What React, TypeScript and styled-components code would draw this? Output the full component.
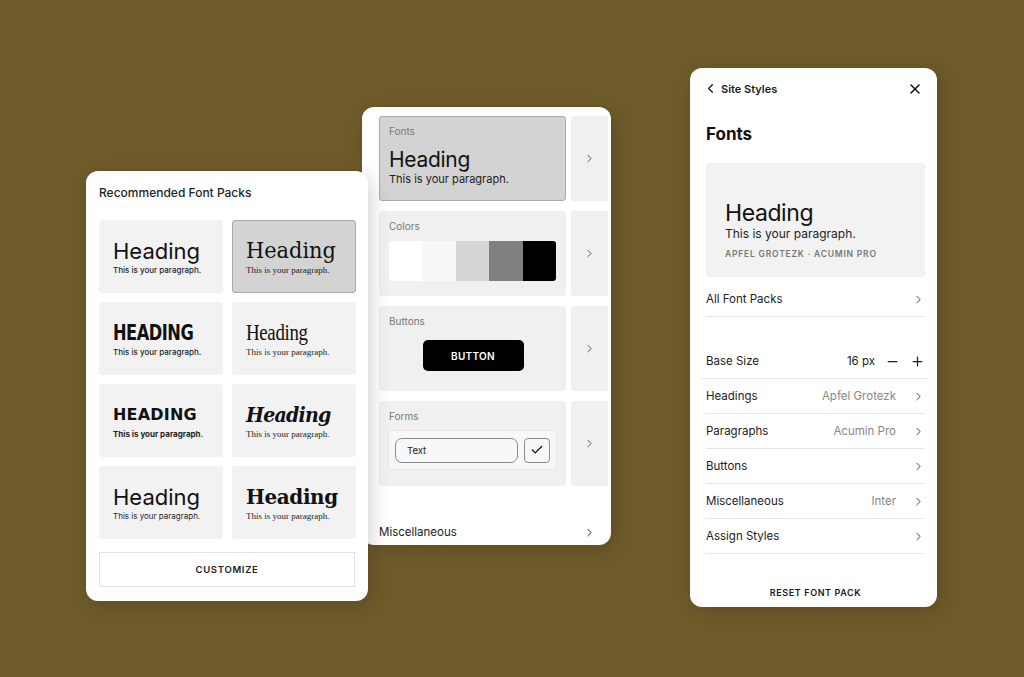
import React from 'react';
import styled, { createGlobalStyle } from 'styled-components';
import { ChevronRight, ChevronLeft, X, Minus, Plus, Check } from 'lucide-react';

const GlobalStyle = createGlobalStyle`
  html, body {
    margin: 0;
    padding: 0;
    background: #6e5b2a;
    font-family: Inter, "Liberation Sans", sans-serif;
    color: #1a1a1a;
  }
  * { box-sizing: border-box; }
`;

const Canvas = styled.div`
  position: relative;
  width: 1024px;
  height: 677px;
  overflow: hidden;
  background: #6e5b2a;
`;

const Card = styled.div<{ $x: number; $y: number; $w: number; $h: number; $z?: number }>`
  position: absolute;
  left: ${(p) => p.$x}px;
  top: ${(p) => p.$y}px;
  width: ${(p) => p.$w}px;
  height: ${(p) => p.$h}px;
  z-index: ${(p) => p.$z ?? 1};
  background: #fff;
  border-radius: 12px;
  overflow: hidden;
  box-shadow: 4px 4px 18px rgba(0, 0, 0, 0.16);
`;

/* ---------- left card ---------- */

const PackCard = styled(Card)`
  padding: 14px 13px 14px 13px;
  display: flex;
  flex-direction: column;
`;

const PackTitle = styled.div`
  font-size: 12px;
  font-weight: 500;
  color: #1e1e1e;
  line-height: 16px;
  margin-bottom: 19px;
`;

const PackGrid = styled.div`
  display: grid;
  grid-template-columns: 124px 124px;
  grid-auto-rows: 73px;
  gap: 9px;
  margin-bottom: 13px;
`;

const PackTile = styled.div<{ $selected?: boolean }>`
  background: ${(p) => (p.$selected ? '#d3d3d3' : '#f2f2f2')};
  border: 1px solid ${(p) => (p.$selected ? '#a9a9a9' : '#f2f2f2')};
  border-radius: 3px;
  display: flex;
  flex-direction: column;
  justify-content: center;
  padding: 0 0 0 13px;
`;

const TileHeading = styled.div<{ $font: string; $weight?: number; $italic?: boolean; $size?: number; $spacing?: number; $stretch?: number }>`
  font-family: ${(p) => p.$font};
  font-weight: ${(p) => p.$weight ?? 400};
  font-style: ${(p) => (p.$italic ? 'italic' : 'normal')};
  font-size: ${(p) => p.$size ?? 22}px;
  letter-spacing: ${(p) => p.$spacing ?? 0}px;
  line-height: 26px;
  color: #111;
  white-space: nowrap;
  transform-origin: left center;
  transform: scaleX(${(p) => p.$stretch ?? 1});
`;

const TileText = styled.div<{ $font: string; $weight?: number; $size?: number }>`
  font-family: ${(p) => p.$font};
  font-weight: ${(p) => p.$weight ?? 400};
  font-size: ${(p) => p.$size ?? 8}px;
  line-height: 12px;
  color: #222;
  white-space: nowrap;
`;

const OutlineButton = styled.div`
  height: 35px;
  border: 1px solid #e2e2e2;
  display: flex;
  align-items: center;
  justify-content: center;
  font-size: 9.5px;
  font-weight: 600;
  letter-spacing: 0.7px;
  color: #222;
`;

/* ---------- middle card ---------- */

const StyleCard = styled(Card)`
  padding: 9px 3px 0 17px;
  display: flex;
  flex-direction: column;
`;

const StyleGrid = styled.div`
  display: grid;
  grid-template-columns: 187px 37px;
  grid-auto-rows: 85px;
  column-gap: 5px;
  row-gap: 10px;
`;

const StylePanel = styled.div<{ $selected?: boolean }>`
  background: ${(p) => (p.$selected ? '#d3d3d3' : '#f0f0f0')};
  border: 1px solid ${(p) => (p.$selected ? '#a9a9a9' : '#f0f0f0')};
  border-radius: 3px;
  padding: 8px 8px 0 9px;
  display: flex;
  flex-direction: column;
`;

const ArrowPanel = styled.div`
  background: #f0f0f0;
  border-radius: 3px 0 0 3px;
  display: flex;
  align-items: center;
  justify-content: center;
  padding-right: 1px;
  color: #555;
`;

const PanelLabel = styled.div`
  font-size: 10px;
  color: #777;
  line-height: 13px;
`;

const PanelHeading = styled.div`
  font-size: 21px;
  line-height: 24px;
  margin-top: 10px;
  letter-spacing: -0.3px;
  color: #111;
`;

const PanelText = styled.div`
  font-size: 11px;
  line-height: 15px;
  color: #222;
`;

const Swatches = styled.div`
  display: flex;
  margin-top: 8px;
  height: 40px;
  border-radius: 3px;
  overflow: hidden;
  margin-right: 1px;
`;

const Swatch = styled.div<{ $c: string }>`
  flex: 1;
  background: ${(p) => p.$c};
`;

const ButtonWrap = styled.div`
  display: flex;
  justify-content: center;
  margin-top: 12px;
`;

const BlackButton = styled.div`
  width: 101px;
  height: 31px;
  background: #000;
  color: #fff;
  border-radius: 5px;
  display: flex;
  align-items: center;
  justify-content: center;
  font-size: 10px;
  font-weight: 600;
  letter-spacing: 0.3px;
`;

const FormBox = styled.div`
  margin-top: 7px;
  margin-left: -1px;
  height: 40px;
  background: #f7f7f7;
  border: 1px solid #e8e8e8;
  border-radius: 2px;
  display: flex;
  align-items: center;
  gap: 6px;
  padding: 0 6px;
`;

const TextInput = styled.div`
  flex: 1;
  height: 25px;
  border: 1px solid #8a8a8a;
  border-radius: 7px;
  display: flex;
  align-items: center;
  padding-left: 11px;
  font-size: 9.5px;
  color: #222;
`;

const CheckBox = styled.div`
  width: 26px;
  height: 25px;
  border: 1px solid #8a8a8a;
  border-radius: 4px;
  display: flex;
  align-items: center;
  justify-content: center;
`;

const MiscRow = styled.div`
  margin-top: 39px;
  display: flex;
  align-items: center;
  justify-content: space-between;
  padding-right: 12px;
  font-size: 11.5px;
  color: #222;
`;

/* ---------- right card ---------- */

const PanelCard = styled(Card)`
  padding: 0 12px 0 16px;
  display: flex;
  flex-direction: column;
`;

const TopBar = styled.div`
  height: 40px;
  display: flex;
  align-items: center;
  justify-content: space-between;
  padding-top: 1px;
  padding-right: 2px;
`;

const BackLink = styled.div`
  display: flex;
  align-items: center;
  gap: 3px;
  margin-left: -3px;
  font-size: 11px;
  font-weight: 600;
  color: #1a1a1a;
`;

const PanelTitle = styled.div`
  font-size: 17px;
  font-weight: 700;
  line-height: 22px;
  margin-top: 15px;
  color: #111;
`;

const Preview = styled.div`
  margin-top: 18px;
  height: 114px;
  background: #f2f2f2;
  border-radius: 3px;
  padding: 0 0 18px 19px;
  display: flex;
  flex-direction: column;
  justify-content: flex-end;
`;

const PreviewHeading = styled.div`
  font-size: 23px;
  line-height: 26px;
  letter-spacing: -0.4px;
  color: #111;
`;

const PreviewText = styled.div`
  font-size: 12px;
  line-height: 15px;
  color: #222;
`;

const PreviewMeta = styled.div`
  margin-top: 8px;
  font-size: 8.5px;
  font-weight: 600;
  letter-spacing: 0.8px;
  color: #777;
`;

const SettingRow = styled.div<{ $wide?: boolean }>`
  height: 35px;
  display: flex;
  align-items: center;
  border-bottom: 1px solid #e6e6e6;
  font-size: 11.5px;
  color: #222;
  margin: ${(p) => (p.$wide ? '0 -4px' : '0')};
  padding: ${(p) => (p.$wide ? '0 4px' : '0')};
`;

const RowLabel = styled.div`
  flex: 1;
`;

const RowValue = styled.div`
  color: #888;
  margin-right: 15px;
`;

const RowIcon = styled.div`
  width: 14px;
  display: flex;
  justify-content: center;
  color: #444;
`;

const Stepper = styled.div`
  display: flex;
  align-items: center;
  gap: 10px;
  color: #222;
`;

const Gap = styled.div<{ $h: number }>`
  height: ${(p) => p.$h}px;
`;

const ResetLink = styled.div`
  margin-top: auto;
  margin-bottom: 9px;
  text-align: center;
  font-size: 9px;
  font-weight: 600;
  letter-spacing: 0.6px;
  color: #1a1a1a;
`;

const SANS = 'Inter, "Liberation Sans", sans-serif';
const SERIF = '"DejaVu Serif", "Liberation Serif", serif';
const TSERIF = '"Liberation Serif", serif';

const packs = [
  { h: <TileHeading $font={SANS}>Heading</TileHeading>, p: SANS, pw: 500 },
  { h: <TileHeading $font={SERIF} $size={22} $stretch={0.95}>Heading</TileHeading>, p: TSERIF, pw: 400, ps: 9, selected: true },
  { h: <TileHeading $font={'"DejaVu Sans Condensed", "DejaVu Sans", sans-serif'} $weight={800} $size={22} $stretch={0.82} $spacing={-0.6}>HEADING</TileHeading>, p: SANS, pw: 500 },
  { h: <TileHeading $font={TSERIF} $size={23} $stretch={0.82} $spacing={-0.4}>Heading</TileHeading>, p: TSERIF, pw: 400, ps: 9 },
  { h: <TileHeading $font={'"DejaVu Sans", sans-serif'} $weight={700} $size={16} $spacing={0.2}>HEADING</TileHeading>, p: SANS, pw: 700 },
  { h: <TileHeading $font={SERIF} $weight={700} $italic $size={20} $spacing={-0.8} $stretch={0.95}>Heading</TileHeading>, p: TSERIF, pw: 400, ps: 9 },
  { h: <TileHeading $font={SANS}>Heading</TileHeading>, p: SANS, pw: 400 },
  { h: <TileHeading $font={SERIF} $weight={700} $size={21} $stretch={0.95} $spacing={-0.4}>Heading</TileHeading>, p: TSERIF, pw: 400, ps: 9 },
];

const fontRows = [
  { label: 'Headings', value: 'Apfel Grotezk' },
  { label: 'Paragraphs', value: 'Acumin Pro' },
  { label: 'Buttons', value: '' },
  { label: 'Miscellaneous', value: 'Inter' },
  { label: 'Assign Styles', value: '' },
];

const Chev = () => <ChevronRight size={13} strokeWidth={1.8} />;

export default function App() {
  return (
    <>
      <GlobalStyle />
      <Canvas>
        <StyleCard $x={362} $y={107} $w={249} $h={438} $z={1}>
          <StyleGrid>
            <StylePanel $selected>
              <PanelLabel>Fonts</PanelLabel>
              <PanelHeading>Heading</PanelHeading>
              <PanelText>This is your paragraph.</PanelText>
            </StylePanel>
            <ArrowPanel><Chev /></ArrowPanel>

            <StylePanel>
              <PanelLabel>Colors</PanelLabel>
              <Swatches>
                {['#ffffff', '#f8f8f8', '#d6d6d6', '#808080', '#000000'].map((c) => (
                  <Swatch key={c} $c={c} />
                ))}
              </Swatches>
            </StylePanel>
            <ArrowPanel><Chev /></ArrowPanel>

            <StylePanel>
              <PanelLabel>Buttons</PanelLabel>
              <ButtonWrap>
                <BlackButton>BUTTON</BlackButton>
              </ButtonWrap>
            </StylePanel>
            <ArrowPanel><Chev /></ArrowPanel>

            <StylePanel>
              <PanelLabel>Forms</PanelLabel>
              <FormBox>
                <TextInput>Text</TextInput>
                <CheckBox><Check size={14} strokeWidth={2.2} color="#111" /></CheckBox>
              </FormBox>
            </StylePanel>
            <ArrowPanel><Chev /></ArrowPanel>
          </StyleGrid>
          <MiscRow>
            <span>Miscellaneous</span>
            <Chev />
          </MiscRow>
        </StyleCard>

        <PackCard $x={86} $y={171} $w={282} $h={430} $z={2}>
          <PackTitle>Recommended Font Packs</PackTitle>
          <PackGrid>
            {packs.map((pk, i) => (
              <PackTile key={i} $selected={pk.selected}>
                {pk.h}
                <TileText $font={pk.p} $weight={pk.pw} $size={pk.ps}>This is your paragraph.</TileText>
              </PackTile>
            ))}
          </PackGrid>
          <OutlineButton>CUSTOMIZE</OutlineButton>
        </PackCard>

        <PanelCard $x={690} $y={68} $w={247} $h={539} $z={3}>
          <TopBar>
            <BackLink>
              <ChevronLeft size={15} strokeWidth={2} />
              Site Styles
            </BackLink>
            <X size={16} strokeWidth={2.2} color="#111" />
          </TopBar>
          <PanelTitle>Fonts</PanelTitle>
          <Preview>
            <PreviewHeading>Heading</PreviewHeading>
            <PreviewText>This is your paragraph.</PreviewText>
            <PreviewMeta>APFEL GROTEZK · ACUMIN PRO</PreviewMeta>
          </Preview>
          <Gap $h={5} />
          <SettingRow>
            <RowLabel>All Font Packs</RowLabel>
            <RowIcon><Chev /></RowIcon>
          </SettingRow>
          <Gap $h={27} />
          <SettingRow $wide>
            <RowLabel>Base Size</RowLabel>
            <Stepper>
              <span>16 px</span>
              <Minus size={15} strokeWidth={2} />
              <Plus size={15} strokeWidth={2} />
            </Stepper>
          </SettingRow>
          {fontRows.map((r) => (
            <SettingRow key={r.label}>
              <RowLabel>{r.label}</RowLabel>
              {r.value && <RowValue>{r.value}</RowValue>}
              <RowIcon><Chev /></RowIcon>
            </SettingRow>
          ))}
          <ResetLink>RESET FONT PACK</ResetLink>
        </PanelCard>
      </Canvas>
    </>
  );
}
